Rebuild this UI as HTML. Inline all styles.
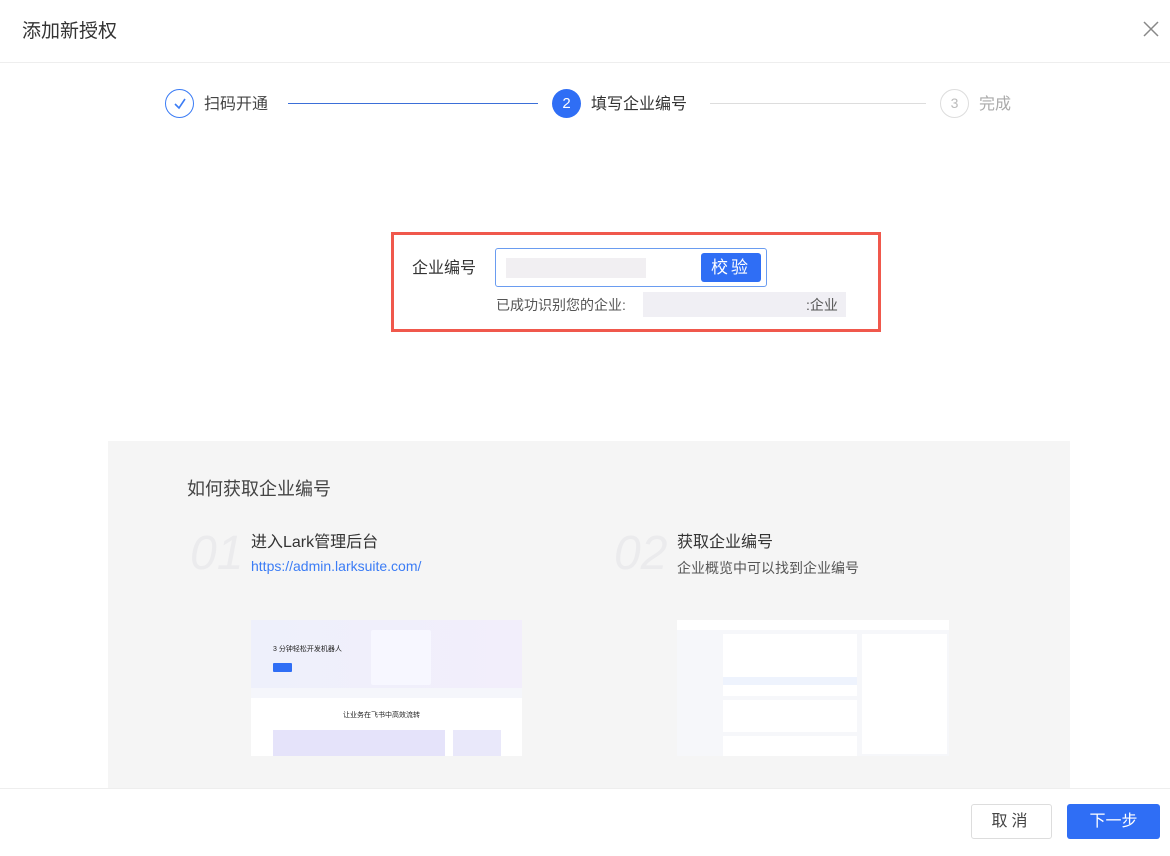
<!DOCTYPE html>
<html><head><meta charset="utf-8"><style>
*{margin:0;padding:0;box-sizing:border-box}
body{width:1170px;height:856px;background:#fff;font-family:"Liberation Sans","Noto Sans CJK SC",sans-serif;position:relative;overflow:hidden;color:#333}
.a{position:absolute}
</style></head><body>
<div class="a" style="left:22px;top:16px;font-size:19px;color:#333">添加新授权</div>
<svg class="a" style="left:1143px;top:21px" width="16" height="16"><path d="M1 1L15 15M15 1L1 15" stroke="#888" stroke-width="1.5"/></svg>
<div class="a" style="left:0;top:62px;width:1170px;height:1px;background:#eee"></div>

<div class="a" style="left:165px;top:89px;width:29px;height:29px;border:1.5px solid #3b7cf5;border-radius:50%"></div>
<svg class="a" style="left:171px;top:95px" width="18" height="18"><path d="M4 9L8 13L14 4" stroke="#3b7cf5" stroke-width="1.6" fill="none"/></svg>
<div class="a" style="left:204px;top:90px;font-size:16px;color:#444">扫码开通</div>
<div class="a" style="left:288px;top:103px;width:250px;height:1px;background:#3b6fd8"></div>
<div class="a" style="left:552px;top:89px;width:29px;height:29px;background:#2f6ef5;border-radius:50%;color:#fff;font-size:15px;text-align:center;line-height:29px">2</div>
<div class="a" style="left:591px;top:90px;font-size:16px;color:#333">填写企业编号</div>
<div class="a" style="left:710px;top:103px;width:216px;height:1px;background:#ddd"></div>
<div class="a" style="left:940px;top:89px;width:29px;height:29px;border:1.5px solid #ddd;border-radius:50%;color:#bbb;font-size:14px;text-align:center;line-height:26px">3</div>
<div class="a" style="left:979px;top:90px;font-size:16px;color:#aaa">完成</div>

<div class="a" style="left:391px;top:232px;width:490px;height:100px;border:3px solid #f0584c"></div>
<div class="a" style="left:412px;top:254px;font-size:16px;color:#333">企业编号</div>
<div class="a" style="left:495px;top:248px;width:272px;height:39px;border:1px solid #6a9cf0;border-radius:3px"></div>
<div class="a" style="left:506px;top:258px;width:140px;height:20px;background:#f1eff2"></div>
<div class="a" style="left:701px;top:253px;width:60px;height:29px;background:#2f6ef5;border-radius:3px;color:#fff;font-size:17px;text-align:center;line-height:29px;letter-spacing:3px">校验</div>
<div class="a" style="left:496px;top:295px;font-size:14px;color:#555">已成功识别您的企业:</div>
<div class="a" style="left:643px;top:292px;width:203px;height:25px;background:#f0eff4"></div>
<div class="a" style="left:806px;top:295px;font-size:14px;color:#555">:企业</div>

<div class="a" style="left:108px;top:441px;width:962px;height:348px;background:#f5f5f5"></div>
<div class="a" style="left:187px;top:475px;font-size:18px;color:#444">如何获取企业编号</div>
<div class="a" style="left:190px;top:526px;font-size:48px;font-style:italic;color:#ebebed">01</div>
<div class="a" style="left:614px;top:526px;font-size:48px;font-style:italic;color:#ebebed">02</div>
<div class="a" style="left:251px;top:528px;font-size:16px;color:#333">进入Lark管理后台</div>
<div class="a" style="left:251px;top:558px;font-size:14px;color:#3b7cf5">https://admin.larksuite.com/</div>
<div class="a" style="left:677px;top:528px;font-size:16px;color:#333">获取企业编号</div>
<div class="a" style="left:677px;top:558px;font-size:14px;color:#555">企业概览中可以找到企业编号</div>

<div class="a" style="left:251px;top:620px;width:271px;height:136px;background:#fff;overflow:hidden">
<div class="a" style="left:0;top:0;width:271px;height:68px;background:linear-gradient(90deg,#eef0fb,#f2eefb)"></div>
<div class="a" style="left:22px;top:24px;font-size:7px;color:#222">3 分钟轻松开发机器人</div>
<div class="a" style="left:22px;top:43px;width:19px;height:9px;background:#2f6ef5;border-radius:1px"></div>
<div class="a" style="left:120px;top:10px;width:60px;height:55px;background:#f7f7ff;border-radius:2px"></div>
<div class="a" style="left:0;top:68px;width:271px;height:10px;background:#f5f6fb"></div>
<div class="a" style="left:92px;top:90px;font-size:7px;color:#222">让业务在飞书中高效流转</div>
<div class="a" style="left:22px;top:110px;width:172px;height:26px;background:#e5e3fa"></div>
<div class="a" style="left:202px;top:110px;width:48px;height:26px;background:#e9e8fa"></div>
</div>
<div class="a" style="left:677px;top:620px;width:272px;height:136px;background:#f6f7fa;overflow:hidden">
<div class="a" style="left:0;top:0;width:272px;height:10px;background:#fff"></div>
<div class="a" style="left:46px;top:14px;width:134px;height:62px;background:#fff"></div>
<div class="a" style="left:46px;top:80px;width:134px;height:32px;background:#fff"></div>
<div class="a" style="left:46px;top:116px;width:134px;height:22px;background:#fff"></div>
<div class="a" style="left:185px;top:14px;width:85px;height:120px;background:#fff"></div>
<div class="a" style="left:46px;top:57px;width:134px;height:8px;background:#eef3fd"></div>
</div>

<div class="a" style="left:0;top:788px;width:1170px;height:1px;background:#eee"></div>
<div class="a" style="left:971px;top:804px;width:81px;height:35px;border:1px solid #ddd;border-radius:3px;font-size:16px;color:#444;text-align:center;line-height:33px;letter-spacing:4px">取消</div>
<div class="a" style="left:1067px;top:804px;width:93px;height:35px;background:#2f6ef5;border-radius:3px;font-size:16px;color:#fff;text-align:center;line-height:35px">下一步</div>
</body></html>
